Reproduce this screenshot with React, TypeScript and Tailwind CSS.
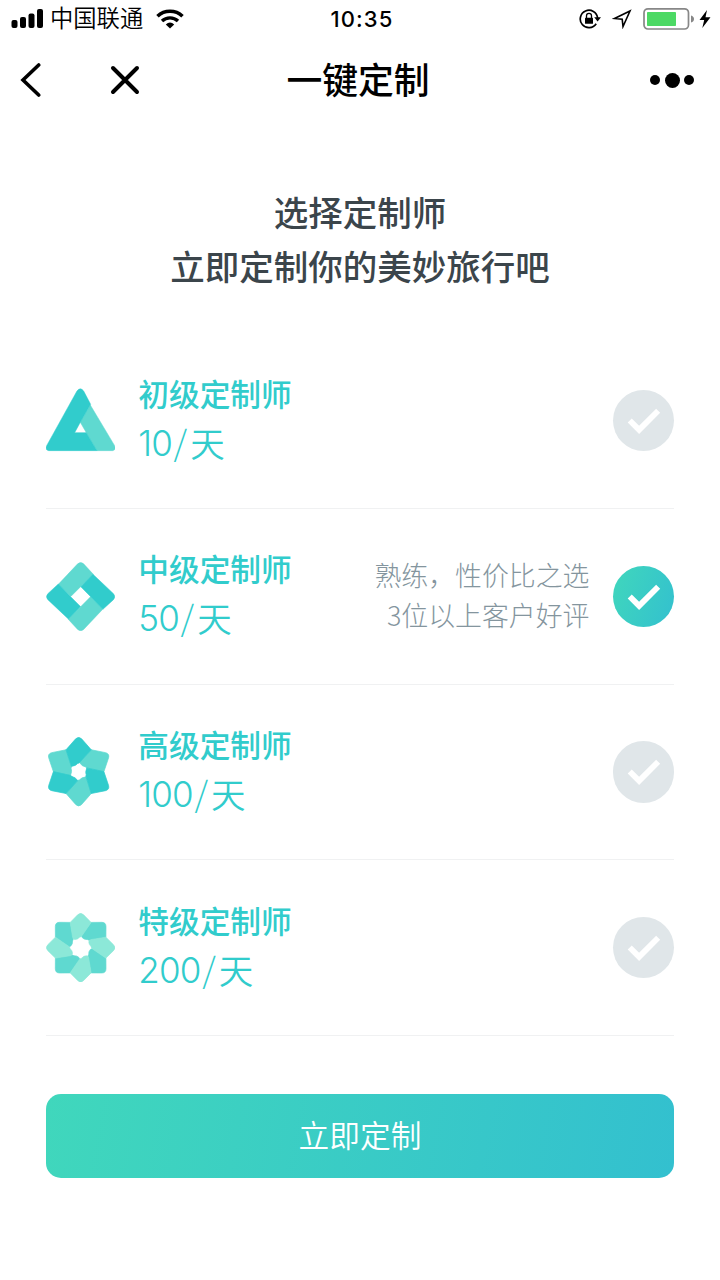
import React, { useState } from "react";

interface Planner {
  name: string;
  amount: number;
  notes: string[];
  icon: React.ReactNode;
}

const TriangleIcon: React.FC = () => (
  <svg viewBox="30 61 208 208" className="size-[69.3px] shrink-0">
    <path
      d="M163 118L133 170L151 201L183 255H230Q242 253 236 240Z"
      fill="#5fd9d0"
      stroke="#5fd9d0"
      strokeWidth="1.5"
    />
    <path
      d="M123 76Q133 63 143 76L164 116L133 170L116 201H151L183 255H38Q26 253 32 240Z"
      fill="#31cccc"
      stroke="#31cccc"
      strokeWidth="1.5"
    />
  </svg>
);

const DiamondIcon: React.FC = () => (
  <svg viewBox="30 64.5 208 208" className="size-[69.3px] shrink-0">
    {[0, 180, 90, 270].map((angle) => (
      <path
        key={angle}
        d="M67 131.5L125 70Q134 62 143 70L172 101.5L134 138.5L104.5 168Z"
        fill={angle % 180 === 0 ? "#5fd9d0" : "#31cccc"}
        stroke={angle % 180 === 0 ? "#5fd9d0" : "#31cccc"}
        strokeWidth="1.5"
        transform={`rotate(${angle} 134 168.5)`}
      />
    ))}
  </svg>
);

const HexStarIcon: React.FC = () => (
  <svg viewBox="30 36.5 208 208" className="size-[69.3px] shrink-0">
    {[60, 180, 300, 0, 120, 240].map((angle) => (
      <path
        key={angle}
        d="M90 75L119 42Q128 33 137 42L166 75L131 113Q128 116 125 116Q120 123 106 125Z"
        fill={angle % 120 === 0 ? "#31cccc" : "#5fd9d0"}
        stroke={angle % 120 === 0 ? "#31cccc" : "#5fd9d0"}
        strokeWidth="2"
        strokeLinejoin="round"
        transform={`rotate(${angle} 128 140.5)`}
      />
    ))}
  </svg>
);

const OctStarIcon: React.FC = () => (
  <svg viewBox="30 38.5 208 208" className="size-[69.3px] shrink-0">
    {[45, 135, 225, 315, 0, 90, 180, 270].map((angle) => (
      <path
        key={angle}
        d="M102.6 66.7L125 44Q134 35 143 44L165.4 66.7L138.5 106Q135 111 131 111Q125 118 117 118Q111 118 110 112Z"
        fill={angle % 90 === 0 ? "#8ce8d8" : "#5fd9d0"}
        stroke={angle % 90 === 0 ? "#8ce8d8" : "#5fd9d0"}
        strokeWidth="2"
        strokeLinejoin="round"
        transform={`rotate(${angle} 134 142.5)`}
      />
    ))}
  </svg>
);

const planners: Planner[] = [
  {
    name: "初级定制师",
    amount: 10,
    notes: [],
    icon: <TriangleIcon />,
  },
  {
    name: "中级定制师",
    amount: 50,
    notes: ["熟练，性价比之选", "3位以上客户好评"],
    icon: <DiamondIcon />,
  },
  {
    name: "高级定制师",
    amount: 100,
    notes: [],
    icon: <HexStarIcon />,
  },
  {
    name: "特级定制师",
    amount: 200,
    notes: [],
    icon: <OctStarIcon />,
  },
];

const StatusBar: React.FC = () => (
  <div className="grid h-[37px] grid-cols-[1fr_auto_1fr] items-center pl-[11px] pr-[9px]">
    <div className="flex items-center">
      <svg viewBox="0 0 33 20" className="h-5 w-[33px]">
        <rect x="0.5" y="11" width="6" height="8" rx="2" />
        <rect x="9" y="8" width="6" height="11" rx="2" />
        <rect x="17.5" y="4.5" width="6" height="14.5" rx="2" />
        <rect x="26" y="0" width="6" height="19" rx="2" />
      </svg>
      <span className="ml-[6px] pb-[2px] text-[23.3px] font-[350] leading-[35px]">
        中国联通
      </span>
      <svg viewBox="0 0 28 20" className="ml-[13px] h-5 w-7" fill="none" stroke="#000">
        <path d="M1.5 7.2C8.5 0.6 19.5 0.6 26.5 7.2" strokeWidth="3.6" />
        <path d="M6 12C10.5 7.8 17.5 7.8 22 12" strokeWidth="3.4" />
        <path d="M9.8 15.5Q14 11.7 18.2 15.5L14 19.5Z" fill="#000" stroke="none" />
      </svg>
    </div>
    <span className="pl-[2px] pt-[1px] font-['Inter'] text-[22px] font-medium tracking-[1.1px]">
      10:35
    </span>
    <div className="flex items-center justify-end">
      {/* Rotation lock */}
      <svg viewBox="0 0 22 20" className="h-5 w-[22px]">
        <path
          d="M17.2 14.8A8.7 8.7 0 1 1 18.6 9"
          fill="none"
          stroke="#000"
          strokeWidth="1.7"
        />
        <path d="M15.2 8.3H22L18.6 12.5Z" />
        <rect x="6" y="8.8" width="8" height="6" rx="0.6" />
        <path d="M7.5 9V6.8a2.5 2.5 0 0 1 5 0v2.2" fill="none" stroke="#000" strokeWidth="1.3" />
      </svg>
      {/* Location arrow */}
      <svg viewBox="0 0 20 20" className="ml-[11px] mr-[1px] h-5 w-5">
        <path
          d="M2.5 9.5L18 2L11 17.5L10.2 10.2Z"
          fill="none"
          stroke="#000"
          strokeWidth="1.6"
        />
      </svg>
      {/* Battery */}
      <svg viewBox="0 0 52 23" className="ml-[10px] h-[23px] w-[52px]">
        <rect x="1" y="1.8" width="44.5" height="20.2" rx="4" fill="none" stroke="#878787" strokeWidth="1.7" />
        <rect x="4" y="5" width="29" height="14" rx="0.8" fill="#4cd964" />
        <path d="M48 8.5Q51 9.5 51 12T48 15.5Z" fill="#878787" />
      </svg>
      <svg viewBox="0 0 12 20" className="ml-[4px] h-5 w-3">
        <path d="M8 1L0.5 11H5.2L3.3 19L11.5 8.2H6.5Z" />
      </svg>
    </div>
  </div>
);

const NavBar: React.FC = () => (
  <div className="grid h-[85px] grid-cols-[1fr_auto_1fr] items-center pl-5 pr-[26px]">
    <div className="flex items-center">
      <svg viewBox="0 0 22 34" className="h-[34px] w-[22px]" fill="none" stroke="#000" strokeWidth="3.6">
        <path d="M18.7 2L3 17L18.7 32" strokeLinecap="round" />
      </svg>
      <svg viewBox="0 0 30 30" className="ml-[68px] size-[30px]" fill="none" stroke="#000" strokeWidth="4">
        <path d="M3 3L27 27M27 3L3 27" strokeLinecap="round" />
      </svg>
    </div>
    <h1 className="pb-[3px] pl-[2px] text-[35.8px] font-medium leading-[80px]">
      一键定制
    </h1>
    <div className="flex items-center justify-end gap-[4.5px] pt-[1px]">
      <span className="size-[9.8px] rounded-full bg-black" />
      <span className="size-[15px] rounded-full bg-black" />
      <span className="size-[9.8px] rounded-full bg-black" />
    </div>
  </div>
);

interface PlannerRowProps {
  planner: Planner;
  selected: boolean;
  onSelect: () => void;
}

const PlannerRow: React.FC<PlannerRowProps> = ({
  planner,
  selected,
  onSelect,
}) => (
  <button
    onClick={onSelect}
    className="flex h-[175.7px] w-full items-center border-b border-[#f0f1f2] text-left"
  >
    {planner.icon}
    <div className="ml-[23px] pb-[6px] text-[#31cccc]">
      <div className="text-[30.7px] font-medium leading-[49px]">
        {planner.name}
      </div>
      <div className="flex text-[34.5px] font-[350] leading-[51px]">
        <span className="pt-[2px] font-['Inter'] text-[35px] font-light leading-[49px] tracking-[-0.8px]">
          {planner.amount}
        </span>
        <span className="-mt-[1px] ml-[1.5px] mr-[3px] font-light">/</span>
        <span>天</span>
      </div>
    </div>
    <div className="ml-auto pb-[2px] text-right text-[26.9px] font-light leading-[40.4px] text-[#84959e]">
      {planner.notes.map((note) => (
        <div key={note}>{note}</div>
      ))}
    </div>
    <span
      className={`ml-[23px] size-[61.5px] shrink-0 rounded-full ${
        selected
          ? "bg-linear-[110deg] from-[#40d7bc] to-[#33c0cf]"
          : "bg-[#e0e6e9]"
      }`}
    >
      <svg viewBox="0 0 61 61" fill="none" stroke="#fff" strokeWidth="5.7">
        <path d="M16.6 30.2L25.9 39.5L44.8 20.6" />
      </svg>
    </span>
  </button>
);

const App: React.FC = () => {
  const [selectedIndex, setSelectedIndex] = useState(1);

  return (
    <div className="h-[1280px] w-[720px] overflow-hidden bg-white font-['Noto_Sans_CJK_SC',sans-serif] text-black">
      <StatusBar />
      <NavBar />
      <main className="px-[46px]">
        <h2 className="pt-[62px] text-center text-[34.5px] font-medium leading-[54px] text-[#3b454b]">
          选择定制师
          <br />
          立即定制你的美妙旅行吧
        </h2>
        <div className="mt-[41.3px]">
          {planners.map((planner, index) => (
            <PlannerRow
              key={planner.name}
              planner={planner}
              selected={index === selectedIndex}
              onSelect={() => setSelectedIndex(index)}
            />
          ))}
        </div>
        <button className="mt-[58px] h-[84px] w-full rounded-[15px] bg-linear-[100deg] from-[#40d7bc] to-[#33c0cf] pb-[5px] text-[30.7px] font-[350] text-white">
          立即定制
        </button>
      </main>
    </div>
  );
};

export default App;
